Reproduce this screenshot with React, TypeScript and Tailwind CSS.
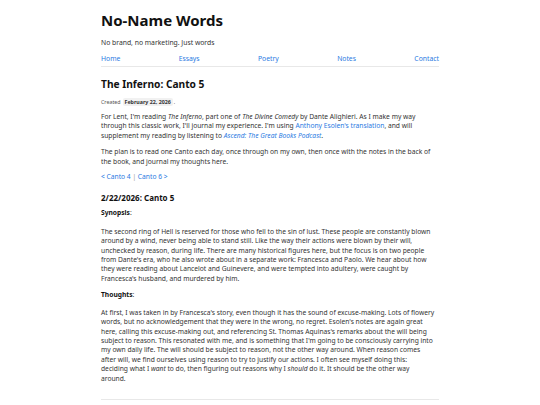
export default function App() {
    const link = 'text-[#2a7ae2]';

    return (
        <div className="min-h-screen bg-white font-['Noto_Sans',sans-serif] text-[#333]">
            <div className="mx-auto w-[338px] pt-[10px]">
                <header>
                    <h1 className="text-[15px] leading-[20px] font-bold text-[#111]">No-Name Words</h1>
                    <p className="mt-[8px] text-[6.8px] leading-[10px] text-[#333]">
                        No brand, no marketing. Just words
                    </p>
                    <nav className="mt-[6px] flex justify-between border-b border-[#e8e8e8] pb-[2px] text-[6.8px] leading-[10px]">
                        <a className={link}>Home</a>
                        <a className={link}>Essays</a>
                        <a className={link}>Poetry</a>
                        <a className={link}>Notes</a>
                        <a className={link}>Contact</a>
                    </nav>
                </header>

                <article>
                    <h2 className="mt-[10px] text-[10.2px] leading-[14px] font-bold text-[#111]">
                        The Inferno: Canto 5
                    </h2>
                    <div className="mt-[7px] flex items-center text-[5.3px] leading-[8px] text-[#555]">
                        <span>Created</span>
                        <span className="ml-[2px] rounded-[2px] bg-[#f1f1f1] px-[2px] font-bold text-[#333]">
                            February 22, 2026
                        </span>
                        <span className="ml-[1px]">.</span>
                    </div>

                    <div className="text-[6.7px] leading-[9.4px]">
                        <p className="mt-[6px]">
                            For Lent, I'm reading <em>The Inferno</em>, part one of <em>The Divine Comedy</em> by Dante Alighieri. As I make my way
                            <br />
                            through this classic work, I'll journal my experience. I'm using{' '}
                            <a className={link}>Anthony Esolen's translation</a>, and will
                            <br />
                            supplement my reading by listening to <a className={`${link} italic`}>Ascend: The Great Books Podcast</a>.
                        </p>
                        <p className="mt-[7px]">
                            The plan is to read one Canto each day, once through on my own, then once with the notes in the back of
                            <br />
                            the book, and journal my thoughts here.
                        </p>
                        <p className={`mt-[6px] ${link}`}>
                            &lt; Canto 4 <span className="text-[#999]">|</span> Canto 6 &gt;
                        </p>
                    </div>

                    <h3 className="mt-[11px] text-[8px] leading-[11px] font-bold text-[#111]">2/22/2026: Canto 5</h3>

                    <div className="text-[6.7px] leading-[9.4px]">
                        <p className="mt-[5px]">
                            <strong className="text-[#111]">Synopsis</strong>:
                        </p>
                        <p className="mt-[9px]">
                            The second ring of Hell is reserved for those who fell to the sin of lust. These people are constantly blown
                            <br />
                            around by a wind, never being able to stand still. Like the way their actions were blown by their will,
                            <br />
                            unchecked by reason, during life. There are many historical figures here, but the focus is on two people
                            <br />
                            from Dante's era, who he also wrote about in a separate work: Francesca and Paolo. We hear about how
                            <br />
                            they were reading about Lancelot and Guinevere, and were tempted into adultery, were caught by
                            <br />
                            Francesca's husband, and murdered by him.
                        </p>
                        <p className="mt-[7px]">
                            <strong className="text-[#111]">Thoughts</strong>:
                        </p>
                        <p className="mt-[8px]">
                            At first, I was taken in by Francesca's story, even though it has the sound of excuse-making. Lots of flowery
                            <br />
                            words, but no acknowledgement that they were in the wrong, no regret. Esolen's notes are again great
                            <br />
                            here, calling this excuse-making out, and referencing St. Thomas Aquinas's remarks about the will being
                            <br />
                            subject to reason. This resonated with me, and is something that I'm going to be consciously carrying into
                            <br />
                            my own daily life. The will should be subject to reason, not the other way around. When reason comes
                            <br />
                            after will, we find ourselves using reason to try to justify our actions. I often see myself doing this:
                            <br />
                            deciding what I <em>want</em> to do, then figuring out reasons why I <em>should</em> do it. It should be the other way
                            <br />
                            around.
                        </p>
                    </div>

                    <div className="mt-[16px] border-t border-[#e8e8e8]" />
                    <div className="h-[4px]" />
                </article>
            </div>
        </div>
    );
}
